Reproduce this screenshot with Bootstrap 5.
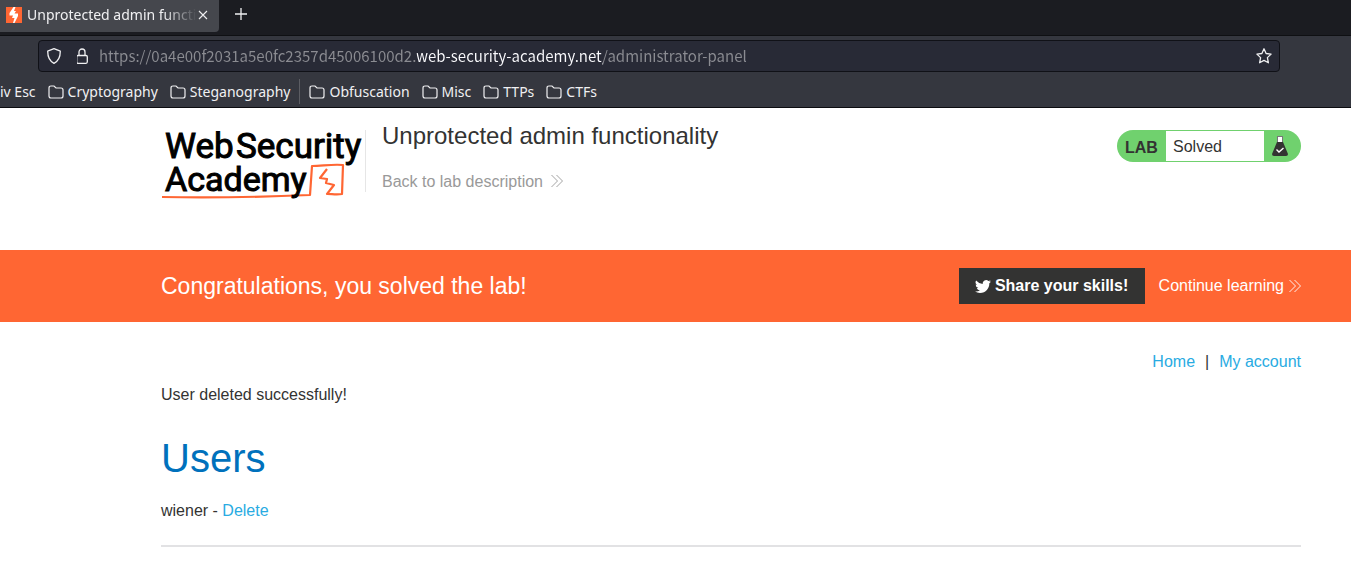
<!DOCTYPE html>
<html lang="en">
<head>
<meta charset="utf-8">
<meta name="viewport" content="width=device-width, initial-scale=1">
<title>Unprotected admin functionality</title>
<link href="https://cdn.jsdelivr.net/npm/bootstrap@5.3.0/dist/css/bootstrap.min.css" rel="stylesheet">
<style>
  body { font: 16px/24px "Liberation Sans", Arial, sans-serif; color: #333332; background: #fff; }
  a { text-decoration: none; }
  svg { flex: none; }

  .browser { font: 14px/20px "Noto Sans", sans-serif; color: #f0f0f2; background: #35373f; border-bottom: 1px solid #0c0c10; }
  .browser svg { fill: none; stroke: currentColor; }
  .browser button { background: none; border: 0; color: inherit; padding: 0; line-height: 0; }
  .tab-strip { height: 36px; background: #1b1c21; border-bottom: 1px solid #0f1013; }
  .tab-item { width: 219px; height: 32px; padding: 0 11px 3px 6px; background: #45474d; border-radius: 0 0 4px 0; }
  .tab-label { width: 170px; margin-left: 5px; -webkit-mask-image: linear-gradient(90deg, #000 80%, transparent); mask-image: linear-gradient(90deg, #000 80%, transparent); }
  .address-row { padding: 4px 71px 3px 38px; }
  .address-bar { height: 32px; padding: 0 7px 0 8px; background: #282a36; border: 1px solid #101117; border-radius: 4px; }
  .address-input { font: 15px/20px "Noto Sans CJK SC", "Noto Sans", sans-serif; background: linear-gradient(90deg, #8b8c92 318px, #fbfbfe 318px 504px, #8b8c92 504px); -webkit-background-clip: text; background-clip: text; -webkit-text-fill-color: transparent; border: 0; outline: 0; padding: 0; color: #fbfbfe; }
  .bookmarks { height: 32px; padding-top: 1px; gap: 12px; }
  .bookmarks a { color: inherit; }
  .divider-line { width: 1px; height: 25px; margin: 0 -3px; background: #5c5d63; }

  .page-pad { padding-left: 161px; padding-right: 50px; }
  .lab-header { height: 142px; padding-top: 22px; }
  .logo-text { font-family: Roboto, sans-serif; font-size: 35px; stroke: #000; stroke-width: 1; }
  .logo-second { font-size: 34px; }
  .title-block { height: 62px; border-left: 1px solid #e6e6e6; padding-left: 16px; }
  .title-block h2 { font-size: 24px; line-height: 28px; margin: -8px 0 20px; }
  .back-link { color: #999; }
  .back-link svg { vertical-align: 0; }
  .lab-status { height: 32px; width: 184px; background: #70d16e; border-radius: 16px; }
  .lab-status strong { padding: 3px 0 0 8px; width: 49px; }
  .status-value { width: 98px; height: 30px; line-height: 32px; padding-left: 7px; background: #fff; }
  .banner { min-height: 72px; background: #f63; color: #fff; }
  .banner h4 { font-size: 23px; line-height: 28px; }
  .share-btn { height: 36px; width: 186px; margin-right: 14px; background: #333332; color: #fff; border: 0; font-weight: 700; }
  .continue-link { gap: 5px; }
  .site-link { color: #29abe2; }
  .main-links { padding-top: 28px; gap: 10px; }
  .notice { margin: 9px 0 27px; }
  .users-title { font-size: 40px; line-height: 48px; margin-bottom: 17px; color: #0071bc; }
  .user-row { margin-bottom: 22px; }
  .end-rule { border-top: 2px solid #e2e2e4; opacity: 1; }
</style>
</head>
<body>
<svg width="0" height="0" class="position-absolute" aria-hidden="true">
  <symbol id="folder" viewBox="0 0 16 14"><path d="M1 3Q1 1 3 1h3l2 2h5q2 0 2 2v6q0 2-2 2H3q-2 0-2-2z" stroke-width="1.2"/></symbol>
  <symbol id="chevrons" viewBox="0 0 12 12"><path d="M.5 0l6 6-6 6M5.500 0l6 6-6 6" fill="none" stroke="currentColor" stroke-width=".9"/></symbol>
</svg>

<header class="browser">
  <div class="tab-strip d-flex">
    <div class="tab-item d-flex align-items-center">
      <svg width="16" height="16" viewBox="0 0 16 16"><path d="M0 0h16v16H0z" fill="#f63" stroke="none"/><path d="M7.500 0L3.500 6v2.500h3.500l-1 2.500h2.500L7 16h1.500L12 9V6.500H8.500L10 4H8l1.500-4z" fill="#fff" stroke="none"/></svg>
      <span class="tab-label text-nowrap overflow-hidden">Unprotected admin functionality</span>
      <button type="button" aria-label="Close tab" class="ms-auto"><svg width="10" height="10" viewBox="0 0 10 10"><path d="M1 1l8 8M9 1l-8 8" stroke-width="1.1"/></svg></button>
    </div>
    <button type="button" aria-label="New tab" class="ms-3 mb-2"><svg width="12" height="12" viewBox="0 0 12 12"><path d="M6 0v12M0 6h12" stroke-width="1.300"/></svg></button>
  </div>
  <div class="address-row">
    <div class="address-bar d-flex align-items-center">
      <svg width="14" height="16" viewBox="0 0 14 16"><path d="M7 .7l6.300 2.500C13.300 9 11.500 13 7 15.300 2.500 13 .7 9 .7 3.200z" stroke-width="1.300" stroke-linejoin="round"/></svg>
      <svg width="14" height="16" viewBox="0 0 14 16" class="ms-3 me-2"><path d="M3 7.500V4a3 3 0 016 0v3.500M2 7.500h8q1.300 0 1.300 1.300v5q0 1.500-1.300 1.500H2Q.7 15.300.7 13.800v-5Q.7 7.500 2 7.500z" transform="translate(-1)" stroke-width="1.300"/></svg>
      <input type="text" class="address-input flex-grow-1" aria-label="Address" value="https://0a4e00f2031a5e0fc2357d45006100d2.web-security-academy.net/administrator-panel">
      <button type="button" aria-label="Bookmark this page"><svg width="16" height="16" viewBox="0 0 16 16"><path d="M8 .8l2.100 4.700 5 .6-3.700 3.500 1 5.200L8 12.400l-4.400 2.400 1-5.200L.9 6.100l5-.6z" stroke-width="1.300" stroke-linejoin="round"/></svg></button>
    </div>
  </div>
  <nav class="bookmarks d-flex align-items-center" aria-label="Bookmarks">
    <a href="#">iv Esc</a>
    <a href="#" class="d-flex align-items-center gap-1"><svg width="16" height="14"><use href="#folder"/></svg>Cryptography</a>
    <a href="#" class="d-flex align-items-center gap-1"><svg width="16" height="14"><use href="#folder"/></svg>Steganography</a>
    <span class="divider-line"></span>
    <a href="#" class="d-flex align-items-center gap-1"><svg width="16" height="14"><use href="#folder"/></svg>Obfuscation</a>
    <a href="#" class="d-flex align-items-center gap-1"><svg width="16" height="14"><use href="#folder"/></svg>Misc</a>
    <a href="#" class="d-flex align-items-center gap-1"><svg width="16" height="14"><use href="#folder"/></svg>TTPs</a>
    <a href="#" class="d-flex align-items-center gap-1"><svg width="16" height="14"><use href="#folder"/></svg>CTFs</a>
  </nav>
</header>

<section class="lab-header page-pad d-flex align-items-start">
  <a href="#" aria-label="Web Security Academy"><svg width="204" height="72" viewBox="0 0 204 72" class="d-block">
    <path d="M1 67c50 1 100 0 148-2l2-29c10 0 20-2 31-1l-1 29c-5 1-10 0-15 0l7-9-8-2 1-4-7-1 7-9" fill="none" stroke="#f63" stroke-width="2.200" stroke-linejoin="round"/>
    <g class="logo-text"><text x="4" y="28">Web</text><text x="75" y="28">Security</text><text x="4" y="61" class="logo-second">Academy</text></g>
  </svg></a>
  <div class="title-block">
    <h2 class="fw-normal">Unprotected admin functionality</h2>
    <a href="#" class="back-link">Back to lab description <svg width="12" height="12" class="ms-1"><use href="#chevrons"/></svg></a>
  </div>
  <div class="lab-status d-flex align-items-center ms-auto">
    <strong>LAB</strong>
    <span class="status-value">Solved</span>
    <svg width="16" height="20" viewBox="0 0 16 20" class="ms-2"><path d="M5.500 1h5v6h-5z" fill="#fff"/><path d="M5 .5h6M5.500 1v5M10.500 1v5" stroke="#777" fill="none"/><path d="M5 6h6l5 12q0 2-2 2H2q-2 0-2-2z" fill="#333332"/><path d="M4.500 13.500L7 16l4.500-4" fill="none" stroke="#fff" stroke-width="1.400"/></svg>
  </div>
</section>

<section class="banner page-pad d-flex align-items-center">
  <h4 class="fw-normal m-0 me-auto">Congratulations, you solved the lab!</h4>
  <button type="button" class="share-btn d-flex align-items-center justify-content-center gap-1"><svg width="16" height="16" viewBox="0 0 16 16" fill="#fff"><path d="M5 15c6 0 9.300-5 9.300-9.300v-.4A6.700 6.700 0 0016 3.500a6.600 6.600 0 01-1.900.5 3.300 3.300 0 001.400-1.800 6.600 6.600 0 01-2.100.8 3.300 3.300 0 00-5.600 3A9.300 9.300 0 011.100 2.600a3.300 3.300 0 001 4.400 3.300 3.300 0 01-1.500-.4A3.300 3.300 0 003.300 9.800a3.300 3.300 0 01-1.500.1 3.300 3.300 0 003.100 2.300A6.600 6.600 0 010 13.500 9.300 9.300 0 005 15"/></svg>Share your skills!</button>
  <a href="#" class="continue-link d-flex align-items-center text-white">Continue learning <svg width="12" height="12"><use href="#chevrons"/></svg></a>
</section>

<main class="page-pad">
  <nav class="d-flex justify-content-end main-links" aria-label="Account">
    <a href="#" class="site-link">Home</a><span>|</span><a href="#" class="site-link">My account</a>
  </nav>
  <p class="notice">User deleted successfully!</p>
  <h1 class="users-title fw-normal">Users</h1>
  <div class="user-row">wiener - <a href="#" class="site-link">Delete</a></div>
  <hr class="end-rule m-0">
</main>
<script src="https://cdn.jsdelivr.net/npm/bootstrap@5.3.0/dist/js/bootstrap.bundle.min.js"></script>
</body>
</html>
